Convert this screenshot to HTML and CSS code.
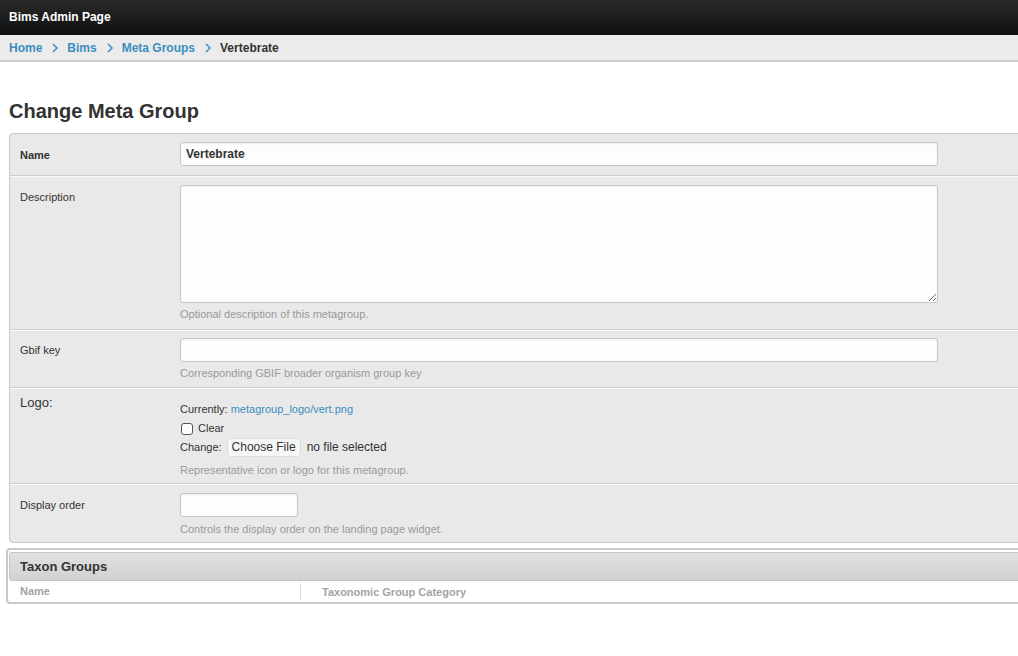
FILE: index.html
```html
<!DOCTYPE html>
<html lang="en">
<head>
    <meta charset="UTF-8">
    <title>Change Meta Group | Bims Admin Page</title>
    <link rel="stylesheet" href="styles.css">
</head>
<body>
<!-- top bar -->
<div class="site-header">Bims Admin Page</div>

<!-- breadcrumbs -->
<div class="crumbs">
    <a href="#">Home</a>
    <svg class="chev" width="6" height="10" viewBox="0 0 6 10"><path d="M1 1 L5 5 L1 9" fill="none" stroke="#3b8ec0" stroke-width="1.5"/></svg>
    <a href="#">Bims</a>
    <svg class="chev" width="6" height="10" viewBox="0 0 6 10"><path d="M1 1 L5 5 L1 9" fill="none" stroke="#3b8ec0" stroke-width="1.5"/></svg>
    <a href="#">Meta Groups</a>
    <svg class="chev" width="6" height="10" viewBox="0 0 6 10"><path d="M1 1 L5 5 L1 9" fill="none" stroke="#3b8ec0" stroke-width="1.5"/></svg>
    <span class="current">Vertebrate</span>
</div>

<div class="content">
    <h1>Change Meta Group</h1>

    <form class="change-form">
        <div class="form-box">
            <div class="form-row row-name">
                <label class="required">Name</label>
                <div class="field">
                    <input type="text" class="text-input wide" value="Vertebrate">
                </div>
            </div>

            <div class="form-row row-desc">
                <label>Description</label>
                <div class="field">
                    <textarea class="text-input wide area"></textarea>
                    <div class="help">Optional description of this metagroup.</div>
                </div>
            </div>

            <div class="form-row row-gbif">
                <label>Gbif key</label>
                <div class="field">
                    <input type="text" class="text-input wide">
                    <div class="help">Corresponding GBIF broader organism group key</div>
                </div>
            </div>

            <div class="form-row row-logo">
                <label class="plain">Logo:</label>
                <div class="field file-field">
                    <div class="file-line first">Currently: <a href="#">metagroup_logo/vert.png</a></div>
                    <div class="file-line"><span class="check"></span>Clear</div>
                    <div class="file-line">Change: <span class="file-btn">Choose File</span><span class="no-file">no file selected</span></div>
                    <div class="help">Representative icon or logo for this metagroup.</div>
                </div>
            </div>

            <div class="form-row last">
                <label>Display order</label>
                <div class="field">
                    <input type="text" class="text-input small">
                    <div class="help">Controls the display order on the landing page widget.</div>
                </div>
            </div>
        </div>

        <!-- inline table -->
        <div class="inline-group">
            <div class="inline-head">Taxon Groups</div>
            <div class="inline-cols">
                <div class="col col-name">Name</div>
                <div class="col col-cat">Taxonomic Group Category</div>
            </div>
        </div>
    </form>
</div>
</body>
</html>
```

FILE: styles.css
```css
html {
    overflow-x: hidden;
}

body {
    margin: 0;
    font-family: "Liberation Sans", Arial, sans-serif;
    color: #333;
    background: #fff;
    width: 1060px;
}

/* top bar */
.site-header {
    height: 35px;
    box-sizing: border-box;
    padding: 10px 9px 0;
    background: linear-gradient(to bottom, #2a2a2a, #0f0f0f);
    color: #fff;
    font-size: 12px;
    font-weight: bold;
}

/* breadcrumbs */
.crumbs {
    height: 25px;
    display: flex;
    align-items: center;
    padding: 0 9px;
    background: #ebebeb;
    border-bottom: 2px solid #cdcdcd;
    font-size: 12px;
    font-weight: bold;
}

.crumbs a {
    color: #3b8ec0;
    text-decoration: none;
}

.crumbs .chev {
    margin: 0 9px 0 10px;
}

.crumbs .current {
    color: #333;
}

.content {
    padding: 0 0 0 9px;
}

h1 {
    margin: 37px 0 10px;
    font-size: 20px;
    line-height: 24px;
    color: #333;
}

/* main form box */
.form-box {
    background: #e9e9e9;
    border: 1px solid #c9c9c9;
    border-radius: 4px;
}

.form-row {
    display: flex;
    padding: 9px 10px 7px;
    border-bottom: 1px solid #cfcfcf;
    box-shadow: inset 0 1px 0 #fafafa;
}

.form-row:first-child {
    box-shadow: none;
}

.form-row.row-name {
    padding: 8px 10px 9px;
}

.form-row.row-name label {
    padding-top: 6px;
}

.form-row.row-desc {
    padding-bottom: 8px;
}

.form-row.row-gbif {
    padding-top: 8px;
}

.form-row.row-logo {
    padding-top: 7px;
    padding-bottom: 6px;
}

.form-row.last {
    border-bottom: none;
    padding-bottom: 6px;
}

.form-row label {
    width: 160px;
    flex-shrink: 0;
    font-size: 11px;
    line-height: 14px;
    padding-top: 5px;
    color: #333;
}

.form-row label.required {
    font-weight: bold;
}

.form-row label.plain {
    font-size: 13px;
    line-height: 16px;
    padding-top: 0;
}

.field {
    display: flex;
    flex-direction: column;
}

.text-input {
    box-sizing: border-box;
    height: 24px;
    margin: 0;
    border: 1px solid #c6c6c6;
    border-radius: 3px;
    background: #fdfdfd;
    font-family: "Liberation Sans", Arial, sans-serif;
    font-size: 12px;
    font-weight: bold;
    color: #333;
    padding: 2px 5px;
    box-shadow: inset 0 1px 2px rgba(0, 0, 0, 0.06);
}

.text-input.wide {
    width: 758px;
}

.text-input.small {
    width: 118px;
}

.text-input.area {
    height: 118px;
    resize: vertical;
}

.help {
    margin-top: 4px;
    font-size: 11px;
    line-height: 14px;
    color: #999;
}

.last .help {
    margin-top: 5px;
}

/* file field */
.file-line {
    font-size: 11px;
    line-height: 19px;
    color: #333;
    display: flex;
    align-items: center;
}

.file-line.first {
    margin-top: 5px;
}

.file-line a {
    color: #3b8ec0;
    text-decoration: none;
    margin-left: 3px;
}

.check {
    width: 10px;
    height: 10px;
    border: 1px solid #555;
    border-radius: 3px;
    background: #fff;
    margin: 0 5px 0 1px;
}

.file-btn {
    display: inline-block;
    height: 17px;
    line-height: 17px;
    margin-left: 5px;
    padding: 0 4px;
    border: 1px solid #dadada;
    border-radius: 4px;
    background: #f6f6f6;
    font-size: 12px;
}

.no-file {
    margin-left: 6px;
    font-size: 12px;
}

.file-field .help {
    margin-top: 6px;
}

/* inline table */
.inline-group {
    margin: 5px 0 0 -3px;
    border: 2px solid #c9c9c9;
    border-radius: 4px;
    padding: 2px 0 0 1px;
}

.inline-head {
    height: 27px;
    line-height: 27px;
    padding-left: 10px;
    font-size: 13px;
    font-weight: bold;
    color: #333;
    border: 1px solid #c4c4c4;
    border-radius: 3px;
    background: linear-gradient(to bottom, #e0e0e0, #d2d2d2);
}

.inline-cols {
    display: flex;
    height: 21px;
    align-items: center;
    font-size: 11px;
    font-weight: bold;
    color: #a3a3a3;
}

.col-name {
    width: 280px;
    padding-left: 11px;
    border-right: 1px solid #dcdcdc;
    height: 17px;
    line-height: 17px;
}

.col-cat {
    padding-left: 21px;
}
```
